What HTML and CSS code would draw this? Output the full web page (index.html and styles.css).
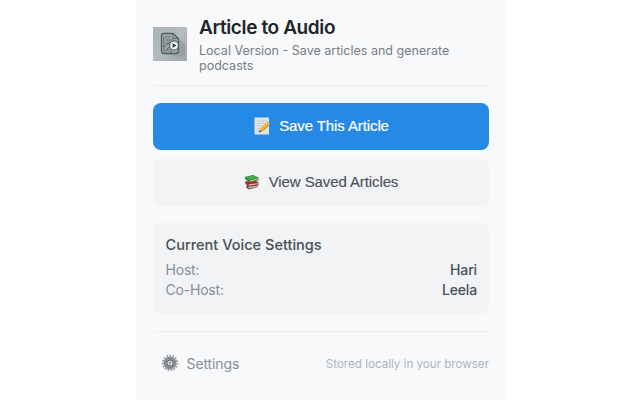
FILE: index.html
```html
<!DOCTYPE html>
<html lang="en">
<head>
<meta charset="utf-8">
<title>Article to Audio</title>
<link rel="stylesheet" href="styles.css">
</head>
<body>
<main class="popup">
  <header class="header">
    <svg class="logo" viewBox="0 0 34 34" aria-hidden="true">
      <defs>
        <linearGradient id="plate" x1="0" y1="0" x2="1" y2="1"><stop offset="0" stop-color="#a9b2b4"/><stop offset=".5" stop-color="#b4bcbe"/><stop offset="1" stop-color="#9ca5a8"/></linearGradient>
      </defs>
      <rect width="34" height="34" fill="url(#plate)"/>
      <path d="M21 6 32 18v9l-4 3-17-3 13-1z" fill="#7f898c" opacity=".4"/>
      <path d="M10.500 6.500h9.500l5.500 5v12.500q0 2.500-2.500 2.500H11q-2.500 0-2.500-2.500V9q0-2.500 2-2.500z" fill="#a0aaad" stroke="#535e62" stroke-width="1.300"/>
      <path d="M20 6.500v5h5.500M12.500 10h5M12.500 13h8M12.500 16h4M10.800 9v15M11 20l6-5 3 4M11 25l7-7M15 25v-4M18 26v-4" fill="none" stroke="#59646a" stroke-width=".9"/>
      <circle cx="21" cy="18.500" r="4.900" fill="#4c565b"/>
      <circle cx="21" cy="18.500" r="3.900" fill="#eef2f3"/>
      <path d="m19.700 16.200 3.800 2.300-3.800 2.300z" fill="#2c363b"/>
    </svg>
    <div class="heading">
      <h1>Article to Audio</h1>
      <p>Local Version - Save articles and generate podcasts</p>
    </div>
  </header>
  <div class="actions">
    <button class="btn primary">
      <svg class="memo" viewBox="0 0 18 18" aria-hidden="true">
        <path d="M1.500 .500h14.500v17H1.500z" fill="#dfe4e6"/>
        <path d="M4 4h10M4 6.500h10M4 9h9M4 11.500h6M4 14h4" stroke="#b3bdc2" stroke-width=".8" stroke-dasharray="2 .6"/>
        <path d="m6.500 13.500 1-2.500 6.500-5.500 2.500 2.300-6.500 6-3.500 1.500z" fill="#efb52f"/>
        <path d="m9.500 13.800 7-6" stroke="#c67e18" stroke-width="1"/>
        <path d="m6.800 12.800 2 1.600L6 15.800z" fill="#63564a"/>
        <path d="m14 5.500 1-.8 2.200 2-1 1.200z" fill="#d69a86"/>
      </svg>
      <span>Save This Article</span>
    </button>
    <button class="btn secondary">
      <svg class="books" viewBox="0 0 16 16" aria-hidden="true">
        <path d="m3 11 9-1 2 3-9 2.500-3-2z" fill="#67484c"/>
        <path d="m4 12.500 9-1 .5 1.300L5 14.500z" fill="#b9bbc3"/>
        <path d="m1 7.500 10-1 3.500 2v3L5 12.500 1.500 10z" fill="#a62b2b"/>
        <path d="m4.500 10.300 9.500-1v1L5 11.400z" fill="#d9c4be"/>
        <path d="m.5 3 8.500-2 5.500 2.500v3L6 8.500 1.500 5.500z" fill="#328b38"/>
        <path d="m2 3.200 7-1.500 4.500 2L6 5.500z" fill="#54ad4d"/>
        <path d="m5.800 6.500 8.200-2v.9L6 7.400z" fill="#c5d2b8"/>
      </svg>
      <span>View Saved Articles</span>
    </button>
  </div>
  <section class="voices">
    <h2>Current Voice Settings</h2>
    <div class="row"><span>Host:</span><strong>Hari</strong></div>
    <div class="row"><span>Co-Host:</span><strong>Leela</strong></div>
  </section>
  <footer class="footer">
    <button class="settings">
      <svg class="gear" viewBox="0 0 18 18" aria-hidden="true">
        <circle cx="9" cy="9" r="7.200" fill="none" stroke="#92989b" stroke-width="2" stroke-dasharray="1.600 1.416"/>
        <circle cx="9" cy="9" r="5.200" fill="#c0c5c7" stroke="#83898d" stroke-width="2.200"/>
        <circle cx="9" cy="9" r="3.200" fill="#dce1e3" stroke="#5c656a" stroke-width="1.200"/>
        <path d="M9 7.400v3.200" stroke="#68747a" stroke-width="1.200"/>
      </svg>
      <span>Settings</span>
    </button>
    <span class="note">Stored locally in your browser</span>
  </footer>
</main>
</body>
</html>
```
FILE: styles.css
```css
* { box-sizing: border-box; }
body { margin: 0; background: #fff; font-family: Inter, "Liberation Sans", sans-serif; }
h1, h2, p { margin: 0; }
button { border: 0; margin: 0; padding: 0; font: inherit; background: none; }
svg { display: block; flex: none; }
.popup { width: 369px; height: 400px; margin-left: 136px; padding: 16px 16px 0 17px; background: #f8f9fb; overflow: hidden; }
.header { display: flex; align-items: center; gap: 12px; height: 70px; padding-bottom: 13px; border-bottom: 1px solid #eceef1; }
.logo { width: 34px; height: 34px; }
.heading { flex: 1; }
h1 { font-size: 19px; line-height: 24px; font-weight: 600; color: #212529; letter-spacing: -.38px; white-space: nowrap; }
.heading p { margin-top: 3px; font-size: 12.530px; line-height: 15px; color: #777d83; }
.actions { display: flex; flex-direction: column; gap: 9px; margin-top: 17px; }
.btn { display: flex; align-items: center; justify-content: center; height: 47px; padding-bottom: 2px; border-radius: 8px; font: 15px/20px "Liberation Sans", Arial, sans-serif; letter-spacing: -.1px; }
.primary { gap: 8px; background: #2589e6; color: #fff; -webkit-text-stroke: .2px #fff; }
.secondary { gap: 9px; background: #f1f3f5; color: #495057; -webkit-text-stroke: .1px #495057; }
.memo { width: 18px; height: 18px; }
.books { width: 16px; height: 16px; }
.voices { height: 91px; margin-top: 16.500px; padding: 12px 12px 12px 12.500px; border-radius: 8px; background: #f1f3f5; }
h2 { height: 25px; font-size: 14.550px; line-height: 20px; font-weight: 500; color: #495057; }
.row { display: flex; justify-content: space-between; height: 20px; font-size: 14px; line-height: 20px; letter-spacing: -.2px; color: #868e96; }
.row strong { font-weight: 500; letter-spacing: -.15px; color: #495057; }
.footer { display: flex; align-items: center; justify-content: space-between; height: 66px; margin-top: 17px; padding-bottom: 1px; border-top: 1px solid #eceef1; }
.settings { display: flex; align-items: center; gap: 8px; padding-left: 7.500px; font-size: 14px; line-height: 20px; letter-spacing: -.1px; color: #868e96; }
.settings span { padding-top: 1px; }
.gear { width: 18px; height: 18px; margin-bottom: 1px; }
.note { font-size: 11.600px; line-height: 16px; color: #adb5bd; }
```
